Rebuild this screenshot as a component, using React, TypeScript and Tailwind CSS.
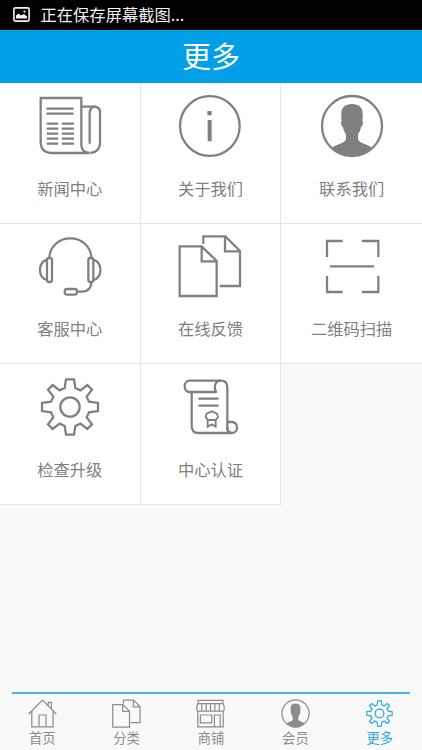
import React from "react";

interface IconProps {
  className?: string;
  strokeWidth?: number;
}

interface MenuItem {
  label: string;
  icon: React.FC<IconProps>;
}

const NewsIcon: React.FC<IconProps> = ({ className, strokeWidth = 6.8 }) => (
  <svg viewBox="113 29 192 192" className={className} fill="none" stroke="currentColor" strokeWidth={strokeWidth}>
    <path d="M121 41H243V183Q245 205 268 206H150Q124 204 121 178Z" />
    <path d="M243 67H284Q299 69 299 84V178Q297 204 270 206" />
    <path d="M284 67Q269 70 268 84V176" strokeLinecap="round" />
    <path
      d="M141 73H217M141 88H217M142 118H171M142 133H171M142 148H171M142 163H171M142 178H171M187 118H218M187 133H218M187 148H218M187 163H218M187 178H218"
      strokeLinecap="round"
    />
  </svg>
);

const InfoIcon: React.FC<IconProps> = ({ className, strokeWidth = 6.8 }) => (
  <svg viewBox="113 29 192 192" className={className} fill="none" stroke="currentColor" strokeWidth={strokeWidth}>
    <circle cx="208.5" cy="125" r="89.5" />
    <path d="M201 80H214V93H201ZM202 107H214V171H202Z" fill="currentColor" stroke="none" />
  </svg>
);

const PersonIcon: React.FC<IconProps> = ({ className, strokeWidth = 6.8 }) => (
  <svg viewBox="116 29 192 192" className={className} fill="none" stroke="currentColor" strokeWidth={strokeWidth}>
    <circle cx="212" cy="125" r="90" />
    <path
      d="M181 110C177 80 180 60 212 59C244 60 247 80 243 110C247 112 244 126 239 128C237 140 232 146 230 151V163C231 176 257 179 271 189C240 224 184 224 153 189C167 179 193 176 194 163V151C192 146 187 140 185 128C180 126 177 112 181 110Z"
      fill="currentColor"
      stroke="none"
    />
  </svg>
);

const HeadsetIcon: React.FC<IconProps> = ({ className, strokeWidth = 6.8 }) => (
  <svg viewBox="113 30 192 192" className={className} fill="none" stroke="currentColor" strokeWidth={strokeWidth}>
    <path d="M147 103C147 68 176 43 210 43S273 68 273 103" />
    <rect x="140" y="102" width="15" height="72" rx="6" />
    <rect x="264" y="102" width="15" height="72" rx="6" />
    <path d="M140 107Q119 113 119 138T140 168M279 107Q300 113 300 138T279 168" />
    <path d="M273 174Q272 203 244 203H230" />
    <rect x="193" y="195" width="37" height="17" rx="7" />
  </svg>
);

const FilesIcon: React.FC<IconProps> = ({ className, strokeWidth = 6.8 }) => (
  <svg viewBox="113 30 192 192" className={className} fill="none" stroke="currentColor" strokeWidth={strokeWidth}>
    <path d="M118 67H184L229 111V216H118Z" />
    <path d="M184 67V112H229" />
    <path d="M189 60V37H255L299 81V186H238" />
    <path d="M254 37V82H299" />
  </svg>
);

const ScanIcon: React.FC<IconProps> = ({ className, strokeWidth = 6.8 }) => (
  <svg viewBox="116 30 192 192" className={className} fill="none" stroke="currentColor" strokeWidth={strokeWidth}>
    <path d="M137 99V51H184M242 51H291V99M291 156V204H242M184 204H137V156M146 127H278" />
  </svg>
);

const GearIcon: React.FC<IconProps> = ({ className, strokeWidth = 6.8 }) => (
  <svg viewBox="114 32 192 192" className={className} fill="none" stroke="currentColor" strokeWidth={strokeWidth}>
    <path d="M198 45H222L226 71L241 78L262 62L276 76L260 97L267 112L294 116V140L267 144L260 159L276 180L262 194L241 178L226 185L222 211H198L194 185L179 178L158 194L144 180L160 159L153 144L126 140V116L153 112L160 97L144 76L158 62L179 78L194 71Z" />
    <circle cx="210" cy="128" r="29" />
  </svg>
);

const CertificateIcon: React.FC<IconProps> = ({ className, strokeWidth = 6.8 }) => (
  <svg viewBox="113 32 192 192" className={className} fill="none" stroke="currentColor" strokeWidth={strokeWidth}>
    <path d="M242 49H148C128 49 128 83 148 83H228" />
    <path d="M228 86C219 66 224 49 242 49C257 49 261 59 261 70V186C261 198 265 206 275 206H174C160 206 154 198 154 184V83" />
    <path d="M261 173H276C295 175 295 206 275 206C265 206 260 198 260 187" />
    <path d="M177 103H232M177 124H232" strokeLinecap="round" />
    <path d="M214 141L230 148L233 158L226 167H203L196 158L199 148Z" strokeWidth="5.5" />
    <path d="M202 166V187L214 180L226 187V166" strokeWidth="5.5" />
  </svg>
);

const HomeIcon: React.FC<IconProps> = ({ className, strokeWidth = 8 }) => (
  <svg viewBox="0 0 192 192" className={className} fill="none" stroke="currentColor" strokeWidth={strokeWidth}>
    <path d="M5 99L96 7L187 99" />
    <path d="M25 80V184H166V80" />
    <path d="M73 184V106H119V184" />
    <path d="M134 43V22H155V65" />
  </svg>
);

const ShopIcon: React.FC<IconProps> = ({ className, strokeWidth = 8 }) => (
  <svg viewBox="0 0 192 192" className={className} fill="none" stroke="currentColor" strokeWidth={strokeWidth}>
    <path d="M14 9H178V30H14Z" />
    <path d="M14 30L6 46V72Q6 80 14 80H178Q186 80 186 72V46L178 30" />
    <path d="M38 30V80M67 30V80M96 30V80M125 30V80M154 30V80" />
    <path d="M12 80V184H180V80M29 106H104V158H29ZM122 184V106H160V184" />
  </svg>
);

const menuItems: MenuItem[] = [
  { label: "新闻中心", icon: NewsIcon },
  { label: "关于我们", icon: InfoIcon },
  { label: "联系我们", icon: PersonIcon },
  { label: "客服中心", icon: HeadsetIcon },
  { label: "在线反馈", icon: FilesIcon },
  { label: "二维码扫描", icon: ScanIcon },
  { label: "检查升级", icon: GearIcon },
  { label: "中心认证", icon: CertificateIcon },
];

const tabs: MenuItem[] = [
  { label: "首页", icon: HomeIcon },
  { label: "分类", icon: FilesIcon },
  { label: "商铺", icon: ShopIcon },
  { label: "会员", icon: PersonIcon },
  { label: "更多", icon: GearIcon },
];

const StatusBar = () => (
  <div className="flex h-[29.5px] shrink-0 items-center bg-black pl-[13px] text-[#f2f2f2]">
    <svg viewBox="0 0 17 15" className="h-[15px] w-[17px]" fill="none">
      <rect x="0.9" y="0.9" width="15.2" height="13.2" rx="1.5" stroke="currentColor" strokeWidth="1.6" />
      <path d="M3 11.5V8.5L5.5 6.5L8 8.5L11 7L14 9.5V11.5Z" fill="currentColor" />
      <circle cx="11.5" cy="4.6" r="1.1" fill="currentColor" />
    </svg>
    <span className="ml-[10.5px] pb-[2px] text-[16.3px] leading-none">正在保存屏幕截图...</span>
  </div>
);

const MenuGrid = () => (
  <div className="grid grid-cols-3">
    {menuItems.map(({ label, icon: Icon }, index) => (
      <button
        key={label}
        className={`flex h-[140.5px] flex-col items-center border-b border-[#e6e6e6] bg-white pt-[10.5px] ${
          index % 3 === 2 ? "" : "border-r"
        }`}
      >
        <Icon className="size-16 shrink-0" />
        <span className="mt-[18px] text-[16.3px] leading-6 whitespace-nowrap">{label}</span>
      </button>
    ))}
  </div>
);

const TabBar = () => (
  <nav className="mt-auto">
    <div className="mx-3 h-[2px] bg-[#45b4e6]"></div>
    <div className="grid h-[56px] grid-cols-5">
      {tabs.map(({ label, icon: Icon }, index) => (
        <button
          key={label}
          className={`flex flex-col items-center pt-[4.5px] ${
            index === tabs.length - 1 ? "text-[#2aa6e0]" : "text-[#8c8c8c]"
          }`}
        >
          <Icon className="size-[29px] shrink-0" strokeWidth={8} />
          <span className="mt-[2.5px] text-[13.3px] leading-4">{label}</span>
        </button>
      ))}
    </div>
  </nav>
);

const App = () => {
  return (
    <div className="flex h-[750px] w-[422px] flex-col overflow-hidden bg-[#f9f9f9] font-['Noto_Sans_CJK_SC',sans-serif] text-[#808080]">
      <StatusBar />
      <header className="flex h-[53.5px] shrink-0 items-center justify-center bg-[#009fe8]">
        <h1 className="pb-[2px] text-[29px] leading-none text-white">更多</h1>
      </header>
      <MenuGrid />
      <TabBar />
    </div>
  );
};

export default App;
